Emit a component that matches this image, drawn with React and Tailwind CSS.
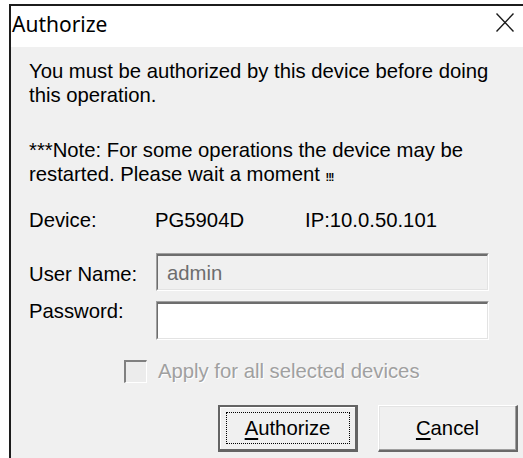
import React from 'react';

// Sunken edit box, classic Win32 look
const EditBox = ({ value, disabled, className = '' }) => (
  <div className={`border-t border-l border-[#a0a0a0] border-b border-r border-b-white border-r-white ${className}`}>
    <div
      className={`h-full border-t-2 border-l border-[#6d6d6d] border-b border-r border-b-[#e3e3e3] border-r-[#e3e3e3] flex items-center pl-[9px] ${
        disabled ? 'bg-[#f0f0f0] text-[#6d6d6d]' : 'bg-white text-black'
      }`}
    >
      {value}
    </div>
  </div>
);

const PushButton = ({ children, isDefault }) => (
  <button
    className={`w-[140px] h-[47px] flex items-center justify-center bg-[#f0f0f0] ${
      isDefault
        ? 'border-2 border-[#646464] border-b-[3px] border-r-[3px] shadow-[inset_1px_1px_0_#ffffff]'
        : 'border-t border-l border-white border-b-2 border-r-2 border-b-[#696969] border-r-[#696969] shadow-[inset_-1px_-1px_0_#a0a0a0,inset_1px_1px_0_#e3e3e3]'
    }`}
  >
    {isDefault ? (
      <span className="w-[124px] h-[32px] border border-dotted border-black flex items-center justify-center">
        {children}
      </span>
    ) : (
      children
    )}
  </button>
);

export default function App() {
  return (
    <div className="w-[523px] h-[458px] bg-white pt-[4px] pl-[9px] overflow-hidden">
      <div className="h-full border-t-2 border-l-2 border-[#1c1c1c] flex flex-col">
        {/* title bar */}
        <div className="h-[41px] bg-white flex items-start justify-between shrink-0">
          <span className="pt-[4px] pl-[1px] text-[21px] leading-[28px] text-black font-['Noto_Sans',sans-serif]">
            Authorize
          </span>
          <svg width="18" height="19" viewBox="0 0 18 19" className="mt-[7px] mr-[9px]">
            <path d="M0.5 0.5 L17.5 18.5 M17.5 0.5 L0.5 18.5" stroke="#1a1a1a" strokeWidth="1.4" fill="none" />
          </svg>
        </div>

        {/* body */}
        <div className="flex-1 bg-[#f0f0f0] pt-[12px] pl-[18px] text-[20.3px] leading-[24px] text-black font-['Liberation_Sans',Arial,sans-serif]">
          <p>
            You must be authorized by this device before doing
            <br />
            this operation.
          </p>
          <p className="mt-[31px]">
            ***Note: For some operations the device may be
            <br />
            restarted. Please wait a moment <span className="text-[11px] tracking-[-1px] font-bold">!!!</span>
          </p>

          <div className="mt-[19px] flex">
            <span className="w-[126px]">Device:</span>
            <span className="w-[150px]">PG5904D</span>
            <span>IP:10.0.50.101</span>
          </div>

          <div className="mt-[21px] grid grid-cols-[127px_333px] gap-y-[10px]">
            <span className="pt-[9px]">User Name:</span>
            <EditBox value="admin" disabled className="h-[38px]" />
            <span className="-mt-[2px]">Password:</span>
            <EditBox value="" className="h-[39px]" />
          </div>

          <div className="mt-[19px] ml-[95px] flex items-center gap-[11px]">
            <div className="w-[23px] h-[23px] border-t-2 border-l-2 border-[#808080] border-b border-r border-b-white border-r-white bg-[#ececec]" />
            <span className="text-[#a0a0a0] [text-shadow:1px_1px_0_#ffffff]">Apply for all selected devices</span>
          </div>

          <div className="mt-[22px] ml-[189px] flex gap-[20px]">
            <PushButton isDefault>
              <span><span className="underline underline-offset-[3px]">A</span>uthorize</span>
            </PushButton>
            <PushButton>
              <span><span className="underline underline-offset-[3px]">C</span>ancel</span>
            </PushButton>
          </div>
        </div>
      </div>
    </div>
  );
}
